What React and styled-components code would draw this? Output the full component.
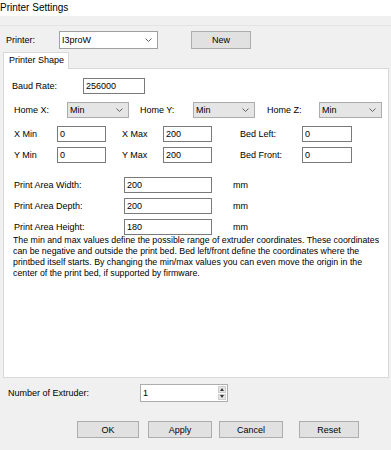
import React from 'react'
import styled, { createGlobalStyle } from 'styled-components'

const Global = createGlobalStyle`
  html, body {
    margin: 0;
    padding: 0;
    background: #f0f0f0;
  }
  body {
    font-family: "Liberation Sans", Arial, sans-serif;
    font-size: 9px;
    color: #000;
  }
`

const Window = styled.div`
  width: 391px;
  height: 450px;
  background: #f0f0f0;
  overflow: hidden;
`

const TitleBar = styled.div`
  height: 16px;
  background: #fff;
  font-size: 10px;
  line-height: 15px;
  padding-left: 0;
`

const MenuStrip = styled.div`
  height: 9px;
  border-bottom: 1px solid #e3e3e3;
`

const Row = styled.div`
  display: flex;
  align-items: center;
  margin-top: ${p => p.$mt || 0}px;
  padding-left: ${p => p.$pl || 0}px;
  height: ${p => p.$h || 16}px;
`

const Label = styled.span`
  width: ${p => p.$w}px;
  margin-left: ${p => p.$ml || 0}px;
  white-space: nowrap;
  flex-shrink: 0;
`

const TextBox = styled.div`
  box-sizing: border-box;
  width: ${p => p.$w}px;
  height: ${p => p.$h || 16}px;
  margin-left: ${p => p.$ml || 0}px;
  background: #fff;
  border: 1px solid #7a7a7a;
  padding-left: 2px;
  line-height: 14px;
  flex-shrink: 0;
`

const Combo = styled.div`
  box-sizing: border-box;
  display: flex;
  align-items: center;
  justify-content: space-between;
  width: ${p => p.$w}px;
  height: ${p => p.$h || 16}px;
  margin-left: ${p => p.$ml || 0}px;
  background: ${p => (p.$editable ? '#fff' : '#e5e5e5')};
  border: 1px solid ${p => (p.$editable ? '#a0a0a0' : '#acacac')};
  padding: 0 5px 0 2px;
  flex-shrink: 0;
`

const Button = styled.div`
  box-sizing: border-box;
  display: flex;
  align-items: center;
  justify-content: center;
  width: ${p => p.$w}px;
  height: ${p => p.$h || 17}px;
  margin-left: ${p => p.$ml || 0}px;
  background: #e1e1e1;
  border: 1px solid #adadad;
  flex-shrink: 0;
`

const TabStrip = styled.div`
  display: flex;
  margin-top: 3px;
  padding-left: 3px;
  position: relative;
  z-index: 1;
`

const Tab = styled.div`
  box-sizing: border-box;
  width: 66px;
  height: 17px;
  background: #fff;
  border: 1px solid #d9d9d9;
  border-bottom: none;
  padding-left: 5px;
  line-height: 15px;
  margin-bottom: -1px;
`

const Panel = styled.div`
  box-sizing: border-box;
  width: 386px;
  height: 310px;
  margin-left: 3px;
  background: #fff;
  border: 1px solid #d9d9d9;
  padding-top: 9px;
`

const Note = styled.p`
  margin: 0;
  padding-left: 9px;
  font-size: 8.8px;
  line-height: 11px;
  white-space: nowrap;
`

const Spinner = styled.div`
  box-sizing: border-box;
  display: flex;
  width: 88px;
  height: 18px;
  background: #fff;
  border: 1px solid #adadad;
`

const SpinValue = styled.div`
  flex: 1;
  padding-left: 2px;
  line-height: 16px;
`

const SpinButtons = styled.div`
  display: flex;
  flex-direction: column;
  width: 8px;
  margin: 1px;
  gap: 1px;
`

const SpinArrow = styled.div`
  flex: 1;
  background: #e5e5e5;
  border: 1px solid #cfcfcf;
  display: flex;
  align-items: center;
  justify-content: center;
`

const Chevron = () => (
  <svg width="7" height="4" viewBox="0 0 7 4">
    <path d="M0.5 0.5 L3.5 3.5 L6.5 0.5" fill="none" stroke="#606060" strokeWidth="1" />
  </svg>
)

const Tri = ({ up }) => (
  <svg width="4" height="3" viewBox="0 0 4 3">
    <path d={up ? 'M0 3 L2 0 L4 3 Z' : 'M0 0 L2 3 L4 0 Z'} fill="#333" />
  </svg>
)

const Select = ({ value, ...rest }) => (
  <Combo {...rest}>
    <span>{value}</span>
    <Chevron />
  </Combo>
)

const App = () => {
  return (
    <Window>
      <Global />
      <TitleBar>Printer Settings</TitleBar>
      <MenuStrip />

      <Row $mt={5} $pl={6} $h={18}>
        <Label $w={53}>Printer:</Label>
        <Select $editable $w={99} $h={18} value="I3proW" />
        <Button $ml={33} $w={60} $h={18}>New</Button>
      </Row>

      <TabStrip>
        <Tab>Printer Shape</Tab>
      </TabStrip>
      <Panel>
        <Row $pl={8}>
          <Label $w={71}>Baud Rate:</Label>
          <TextBox $w={62}>256000</TextBox>
        </Row>
        <Row $mt={8} $pl={10}>
          <Label $w={53}>Home X:</Label>
          <Select $w={62} value="Min" />
          <Label $ml={11} $w={53}>Home Y:</Label>
          <Select $w={62} value="Min" />
          <Label $ml={12} $w={52}>Home Z:</Label>
          <Select $w={63} value="Min" />
        </Row>
        <Row $mt={8} $pl={10}>
          <Label $w={43}>X Min</Label>
          <TextBox $w={49}>0</TextBox>
          <Label $ml={16} $w={41}>X Max</Label>
          <TextBox $w={49}>200</TextBox>
          <Label $ml={28} $w={62}>Bed Left:</Label>
          <TextBox $w={50}>0</TextBox>
        </Row>
        <Row $mt={5} $pl={10}>
          <Label $w={43}>Y Min</Label>
          <TextBox $w={49}>0</TextBox>
          <Label $ml={16} $w={41}>Y Max</Label>
          <TextBox $w={49}>200</TextBox>
          <Label $ml={28} $w={62}>Bed Front:</Label>
          <TextBox $w={50}>0</TextBox>
        </Row>
        <Row $mt={14} $pl={10}>
          <Label $w={110}>Print Area Width:</Label>
          <TextBox $w={88}>200</TextBox>
          <Label $ml={21}>mm</Label>
        </Row>
        <Row $mt={5} $pl={10}>
          <Label $w={110}>Print Area Depth:</Label>
          <TextBox $w={88}>200</TextBox>
          <Label $ml={21}>mm</Label>
        </Row>
        <Row $mt={5} $pl={10}>
          <Label $w={110}>Print Area Height:</Label>
          <TextBox $w={88}>180</TextBox>
          <Label $ml={21}>mm</Label>
        </Row>
        <Note>
          The min and max values define the possible range of extruder coordinates. These coordinates<br />
          can be negative and outside the print bed. Bed left/front define the coordinates where the<br />
          printbed itself starts. By changing the min/max values you can even move the origin in the<br />
          center of the print bed, if supported by firmware.
        </Note>
      </Panel>

      <Row $mt={6} $pl={8} $h={18}>
        <Label $w={132}>Number of Extruder:</Label>
        <Spinner>
          <SpinValue>1</SpinValue>
          <SpinButtons>
            <SpinArrow><Tri up /></SpinArrow>
            <SpinArrow><Tri /></SpinArrow>
          </SpinButtons>
        </Spinner>
      </Row>

      <Row $mt={19} $pl={77} $h={17}>
        <Button $w={62}>OK</Button>
        <Button $ml={9} $w={64}>Apply</Button>
        <Button $ml={7} $w={64}>Cancel</Button>
        <Button $ml={16} $w={60}>Reset</Button>
      </Row>
    </Window>
  )
}

export default App
